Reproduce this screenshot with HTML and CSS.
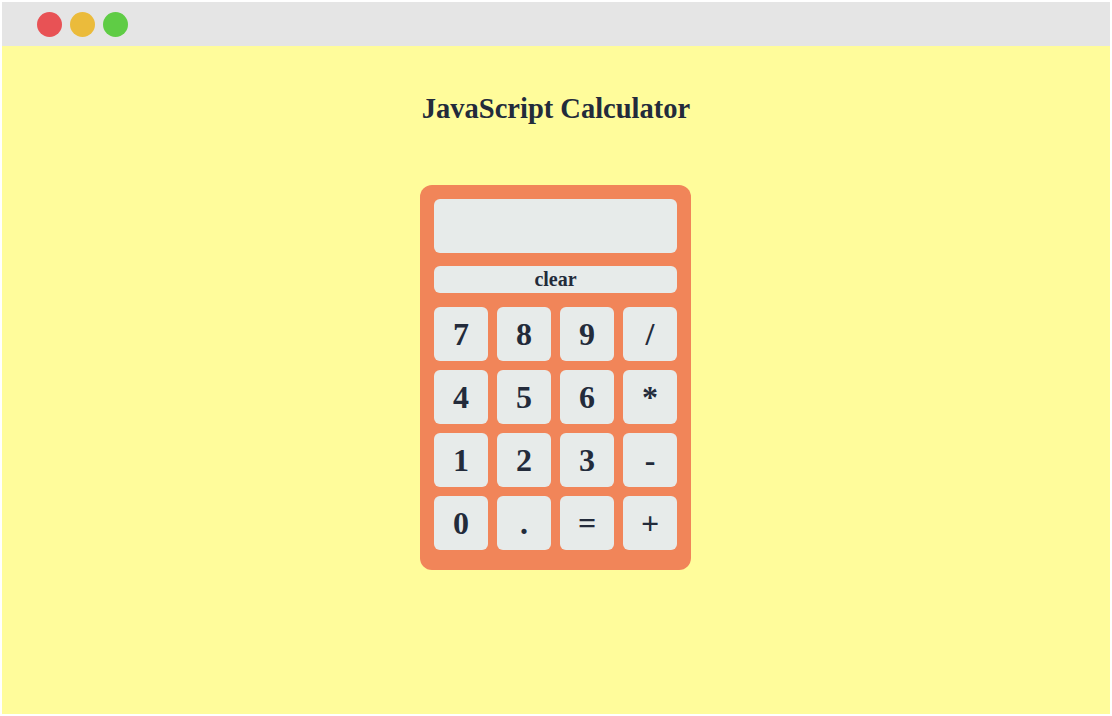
FILE: index.html
```html
<!DOCTYPE html>
<html>
<head>
<meta charset="utf-8">
<link rel="stylesheet" href="styles.css">
</head>
<body>
<div class="window">
  <div class="titlebar">
    <span class="dot red"></span>
    <span class="dot yellow"></span>
    <span class="dot green"></span>
  </div>
  <div class="content">
    <h1 class="title">JavaScript Calculator</h1>
    <div class="calc">
      <div class="display"></div>
      <button class="clear">clear</button>
      <div class="keys">
        <button class="key">7</button>
        <button class="key">8</button>
        <button class="key">9</button>
        <button class="key op">/</button>
        <button class="key">4</button>
        <button class="key">5</button>
        <button class="key">6</button>
        <button class="key op">*</button>
        <button class="key">1</button>
        <button class="key">2</button>
        <button class="key">3</button>
        <button class="key op">-</button>
        <button class="key">0</button>
        <button class="key">.</button>
        <button class="key op">=</button>
        <button class="key op">+</button>
      </div>
    </div>
  </div>
</div>
</body>
</html>
```

FILE: styles.css
```css
html, body {
  margin: 0;
  padding: 0;
  background: #ffffff;
}
body {
  padding: 2px;
  width: 1108px;
  height: 712px;
  font-family: "Liberation Serif", "Times New Roman", serif;
}
.window {
  width: 1108px;
  height: 712px;
  display: flex;
  flex-direction: column;
}
.titlebar {
  height: 44px;
  background: #e5e5e5;
  display: flex;
  align-items: center;
  gap: 8px;
  padding-left: 35px;
  flex: none;
}
.dot {
  width: 25px;
  height: 25px;
  border-radius: 50%;
  display: block;
}
.red { background: #e85255; }
.yellow { background: #ebbb3b; }
.green { background: #5fcc45; }
.content {
  flex: 1;
  background: #fffc9b;
  display: flex;
  flex-direction: column;
  align-items: center;
}
.title {
  margin: 45px 0 0 0;
  font-size: 28.5px;
  line-height: 36px;
  font-weight: bold;
  color: #232b3b;
}
.calc {
  margin-top: 58px;
  margin-right: 1px;
  width: 243px;
  padding: 14px 14px 20px 14px;
  background: #f18559;
  border-radius: 12px;
  display: flex;
  flex-direction: column;
}
.display {
  height: 54px;
  background: #e7ebea;
  border-radius: 6px;
}
button {
  border: none;
  background: #e7ebea;
  color: #232b3b;
  font-family: "Liberation Serif", "Times New Roman", serif;
  font-weight: bold;
  padding: 0;
  cursor: pointer;
}
.clear {
  margin-top: 13px;
  height: 27px;
  border-radius: 6px;
  font-size: 20px;
  line-height: 27px;
}
.keys {
  margin-top: 14px;
  display: grid;
  grid-template-columns: repeat(4, 54px);
  grid-auto-rows: 54px;
  gap: 9px;
}
.key {
  border-radius: 6px;
  font-size: 32px;
  line-height: 54px;
}
```
